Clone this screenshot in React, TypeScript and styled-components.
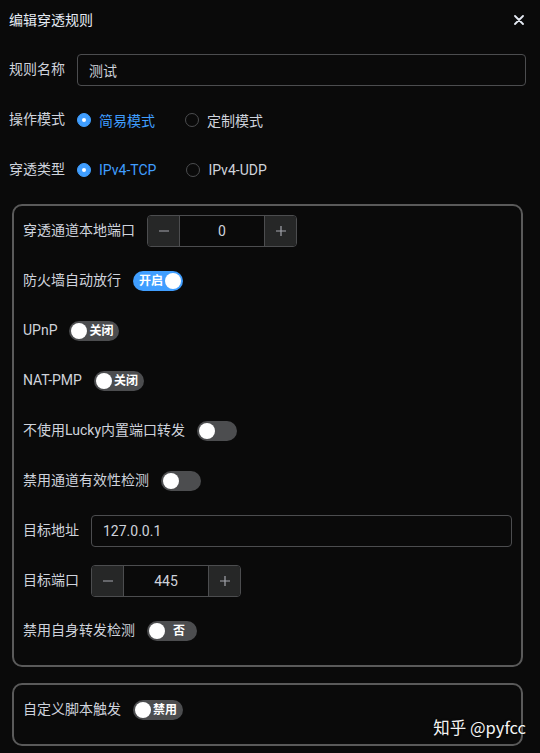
import React from "react";
import styled, { createGlobalStyle } from "styled-components";

const GlobalStyle = createGlobalStyle`
  html, body {
    margin: 0;
    padding: 0;
    background: #0a0a0a;
  }
  body {
    font-family: Roboto, "Noto Sans CJK SC", sans-serif;
    color: #cfd3dc;
  }
  * { box-sizing: border-box; }
`;

const Page = styled.div`
  position: relative;
  width: 540px;
  height: 753px;
  overflow: hidden;
  background: #0a0a0a;
`;

const Header = styled.div`
  height: 40px;
  display: flex;
  align-items: center;
  justify-content: space-between;
  padding: 0 15px 0 9px;
`;

const Title = styled.div`
  font-size: 14px;
  color: #e5eaf3;
  line-height: 20px;
`;

const CloseButton = styled.button`
  width: 12px;
  height: 12px;
  padding: 0;
  border: 0;
  background: transparent;
  display: flex;
  align-items: center;
  justify-content: center;
  color: #e5eaf3;
`;

const Body = styled.div`
  padding: 14px 14px 0 9px;
`;

const FormItem = styled.div`
  display: flex;
  align-items: center;
  height: 32px;
  margin-bottom: 18px;
`;

const Label = styled.span`
  font-size: 14px;
  line-height: 30px;
  padding-bottom: 2px;
  color: #cfd3dc;
  padding-right: 12px;
  white-space: nowrap;
`;

const TextInput = styled.input`
  flex: 1;
  min-width: 0;
  height: 32px;
  border: 1px solid #4c4d4f;
  border-radius: 4px;
  background: transparent;
  color: #cfd3dc;
  font-family: inherit;
  font-size: 14px;
  padding: 0 11px;
  outline: none;
`;

const RadioGroup = styled.div`
  display: flex;
  align-items: center;
`;

const RadioOption = styled.label<{ $checked?: boolean }>`
  display: flex;
  align-items: center;
  gap: 8px;
  margin-right: 30px;
  font-size: 14px;
  color: ${(p) => (p.$checked ? "#409eff" : "#cfd3dc")};
  white-space: nowrap;
`;

const RadioDot = styled.span<{ $checked?: boolean }>`
  width: 14px;
  height: 14px;
  border-radius: 50%;
  border: 1px solid ${(p) => (p.$checked ? "#409eff" : "#4c4d4f")};
  background: ${(p) => (p.$checked ? "#409eff" : "transparent")};
  display: flex;
  align-items: center;
  justify-content: center;
  &::after {
    content: "";
    width: 4px;
    height: 4px;
    border-radius: 50%;
    background: #fff;
    display: ${(p) => (p.$checked ? "block" : "none")};
  }
`;

const Section = styled.div`
  border: 2px solid #5a5a5a;
  border-radius: 10px;
  padding: 9px 9px 0;
  margin: 0 3px 16px;
`;

const NumberBox = styled.div`
  display: flex;
  width: 150px;
  height: 32px;
  border: 1px solid #4c4d4f;
  border-radius: 4px;
  overflow: hidden;
`;

const StepButton = styled.span<{ $side: "left" | "right" }>`
  width: 32px;
  height: 100%;
  display: flex;
  align-items: center;
  justify-content: center;
  background: #262727;
  color: #a3a6ad;
  ${(p) =>
    p.$side === "left"
      ? "border-right: 1px solid #4c4d4f;"
      : "border-left: 1px solid #4c4d4f;"}
`;

const NumberValue = styled.span`
  flex: 1;
  display: flex;
  align-items: center;
  justify-content: center;
  font-size: 14px;
  color: #cfd3dc;
`;

const Track = styled.span<{ $on?: boolean; $width: number }>`
  position: relative;
  display: inline-flex;
  align-items: center;
  width: ${(p) => p.$width}px;
  height: 20px;
  border-radius: 10px;
  background: ${(p) => (p.$on ? "#409eff" : "#4c4d4f")};
  padding: ${(p) => (p.$on ? "0 18px 0 4px" : "0 4px 0 18px")};
`;

const SwitchText = styled.span`
  flex: 1;
  text-align: center;
  font-size: 12px;
  font-weight: 600;
  color: #fff;
  line-height: 20px;
  white-space: nowrap;
`;

const Knob = styled.span<{ $on?: boolean }>`
  position: absolute;
  top: 2px;
  ${(p) => (p.$on ? "right: 2px;" : "left: 2px;")}
  width: 16px;
  height: 16px;
  border-radius: 50%;
  background: #fff;
`;

const Watermark = styled.div`
  position: absolute;
  right: 14px;
  bottom: 14px;
  font-family: "Noto Sans CJK SC", "Liberation Sans", sans-serif;
  font-size: 16.5px;
  color: #f4f4f4;
  text-shadow: 0 0 2px rgba(0, 0, 0, 0.8);
  white-space: nowrap;
`;

const Switch = ({ on, text, width }: { on?: boolean; text?: string; width: number }) => (
  <Track $on={on} $width={width}>
    <SwitchText>{text}</SwitchText>
    <Knob $on={on} />
  </Track>
);

const Minus = () => (
  <svg width="12" height="12" viewBox="0 0 12 12">
    <path d="M1 6h10" stroke="currentColor" strokeWidth="1.2" />
  </svg>
);

const Plus = () => (
  <svg width="12" height="12" viewBox="0 0 12 12">
    <path d="M1 6h10M6 1v10" stroke="currentColor" strokeWidth="1.2" />
  </svg>
);

const NumberInput = ({ value }: { value: string }) => (
  <NumberBox>
    <StepButton $side="left">
      <Minus />
    </StepButton>
    <NumberValue>{value}</NumberValue>
    <StepButton $side="right">
      <Plus />
    </StepButton>
  </NumberBox>
);

const Radio = ({ checked, label }: { checked?: boolean; label: string }) => (
  <RadioOption $checked={checked}>
    <RadioDot $checked={checked} />
    {label}
  </RadioOption>
);

export default function App() {
  return (
    <Page>
      <GlobalStyle />
      <Header>
        <Title>编辑穿透规则</Title>
        <CloseButton aria-label="close">
          <svg width="10" height="10" viewBox="0 0 10 10">
            <path d="M1 1l8 8M9 1l-8 8" stroke="currentColor" strokeWidth="1.8" strokeLinecap="round" />
          </svg>
        </CloseButton>
      </Header>
      <Body>
        <FormItem>
          <Label>规则名称</Label>
          <TextInput defaultValue="测试" />
        </FormItem>
        <FormItem>
          <Label>操作模式</Label>
          <RadioGroup>
            <Radio checked label="简易模式" />
            <Radio label="定制模式" />
          </RadioGroup>
        </FormItem>
        <FormItem>
          <Label>穿透类型</Label>
          <RadioGroup>
            <Radio checked label="IPv4-TCP" />
            <Radio label="IPv4-UDP" />
          </RadioGroup>
        </FormItem>
        <Section>
          <FormItem>
            <Label>穿透通道本地端口</Label>
            <NumberInput value="0" />
          </FormItem>
          <FormItem>
            <Label>防火墙自动放行</Label>
            <Switch on text="开启" width={50} />
          </FormItem>
          <FormItem>
            <Label>UPnP</Label>
            <Switch text="关闭" width={50} />
          </FormItem>
          <FormItem>
            <Label>NAT-PMP</Label>
            <Switch text="关闭" width={50} />
          </FormItem>
          <FormItem>
            <Label>不使用Lucky内置端口转发</Label>
            <Switch width={40} />
          </FormItem>
          <FormItem>
            <Label>禁用通道有效性检测</Label>
            <Switch width={40} />
          </FormItem>
          <FormItem>
            <Label>目标地址</Label>
            <TextInput defaultValue="127.0.0.1" />
          </FormItem>
          <FormItem>
            <Label>目标端口</Label>
            <NumberInput value="445" />
          </FormItem>
          <FormItem>
            <Label>禁用自身转发检测</Label>
            <Switch text="否" width={50} />
          </FormItem>
        </Section>
        <Section>
          <FormItem>
            <Label>自定义脚本触发</Label>
            <Switch text="禁用" width={50} />
          </FormItem>
        </Section>
      </Body>
      <Watermark>知乎 @pyfcc</Watermark>
    </Page>
  );
}
